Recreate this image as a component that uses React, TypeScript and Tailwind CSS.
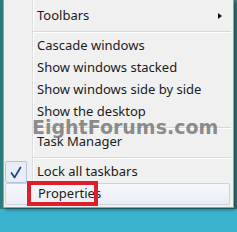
import React from "react";

// Menu contextuel de la barre des tâches (Windows 8) + annotation rouge.

type Item =
  | { kind: "item"; label: string; submenu?: boolean; checked?: boolean; hover?: boolean }
  | { kind: "sep" };

const ITEMS: Item[] = [
  { kind: "item", label: "Toolbars", submenu: true },
  { kind: "sep" },
  { kind: "item", label: "Cascade windows" },
  { kind: "item", label: "Show windows stacked" },
  { kind: "item", label: "Show windows side by side" },
  { kind: "item", label: "Show the desktop" },
  { kind: "sep" },
  { kind: "item", label: "Task Manager" },
  { kind: "sep" },
  { kind: "item", label: "Lock all taskbars", checked: true },
  { kind: "item", label: "Properties", hover: true },
];

function CheckGlyph() {
  return (
    <svg width="12" height="13" viewBox="0 0 12 13" fill="none" aria-hidden>
      <path d="M1.5 7 4.5 11.5 10.5 1.5" stroke="#22408c" strokeWidth="1.7" strokeLinecap="round" strokeLinejoin="round" />
    </svg>
  );
}

function Row({ item }: { item: Extract<Item, { kind: "item" }> }) {
  return (
    <div
      className={`relative flex h-[22px] items-center ${
        item.hover
          ? "mr-[3px] ml-[1px] rounded-[2px] border border-[#c9d3e0] bg-gradient-to-b from-[#f5f7fa] to-[#eaeef4]"
          : ""
      }`}
    >
      {item.checked && (
        <div className="absolute left-[1px] top-0 grid h-[22px] w-[22px] place-items-center rounded-[2px] border border-[#b4c3d8] bg-[#e9eef6]">
          <CheckGlyph />
        </div>
      )}
      <span className={`${item.hover ? "pl-[32px]" : "pl-[33px]"} text-[13px] text-[#1b1b1b]`}>{item.label}</span>
      {item.submenu && (
        <span className="ml-auto mr-[11px] h-0 w-0 border-y-[3.5px] border-l-[4px] border-y-transparent border-l-[#111]" />
      )}
    </div>
  );
}

export default function App() {
  return (
    <div
      className="flex h-[232px] w-[237px] flex-col overflow-hidden bg-[#3ab3cf]"
      style={{ fontFamily: '"Noto Sans", "Open Sans", sans-serif' }}
    >
      <div className="h-[209px] shrink-0 bg-[#2e7b7f]">
        <div className="relative ml-[3px] h-[208px] w-[231px] border-x border-b border-[#9a9fa3] bg-[#f0f0f0] pt-[5px] shadow-[2px_2px_3px_rgba(0,0,0,0.35)]">
          {/* filet vertical de la gouttière d'icônes */}
          <div className="absolute bottom-0 left-[28px] top-0 w-[2px] border-l border-[#dddddd] bg-white" />

          {ITEMS.map((it, i) =>
            it.kind === "sep" ? (
              <div key={i} className="relative h-[8px] pl-[29px] pr-[2px] pt-[4px]">
                <div className="h-[2px] border-t border-[#d8d8d8] bg-white" />
              </div>
            ) : (
              <Row key={i} item={it} />
            ),
          )}

          {/* filigrane */}
          <div className="pointer-events-none absolute left-[28px] top-[114px] text-[19px] font-bold leading-[26px] text-[#7d7d7d]/90"
            style={{ fontFamily: '"DejaVu Sans", Verdana, sans-serif' }}>
            EightForums.com
          </div>

          {/* annotation rouge */}
          <div className="pointer-events-none absolute left-[23px] top-[181px] h-[25px] w-[71px] border-[4px] border-[#dc1f2b]" />
        </div>
      </div>
    </div>
  );
}
